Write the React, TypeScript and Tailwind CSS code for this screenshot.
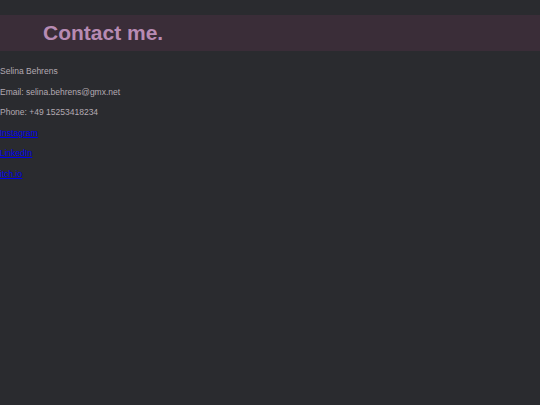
export default function App() {
  return (
    <div className="min-h-[405px] w-full bg-[#2a2b2f] pt-[15px] font-['Liberation_Sans',Arial,sans-serif]">
      <div className="flex h-[36px] items-center bg-[#3a2d38] pb-[2px] pl-[43px]">
        <h1 className="font-['Liberation_Sans',Arial,sans-serif] text-[21px] font-bold leading-none text-[#b78bb3]">Contact me.</h1>
      </div>
      <div className="mt-[15px] flex flex-col gap-[10.5px] font-['Liberation_Sans',Arial,sans-serif] text-[8.5px] leading-[10px] text-[#b3aab2]">
        <p>Selina Behrens</p>
        <p>Email: selina.behrens@gmx.net</p>
        <p>Phone: +49 15253418234</p>
        <p><a href="#" className="font-['Liberation_Sans',Arial,sans-serif] text-[#0000ee] underline">Instagram</a></p>
        <p><a href="#" className="font-['Liberation_Sans',Arial,sans-serif] text-[#0000ee] underline">LinkedIn</a></p>
        <p><a href="#" className="font-['Liberation_Sans',Arial,sans-serif] text-[#0000ee] underline">itch.io</a></p>
      </div>
    </div>
  );
}
